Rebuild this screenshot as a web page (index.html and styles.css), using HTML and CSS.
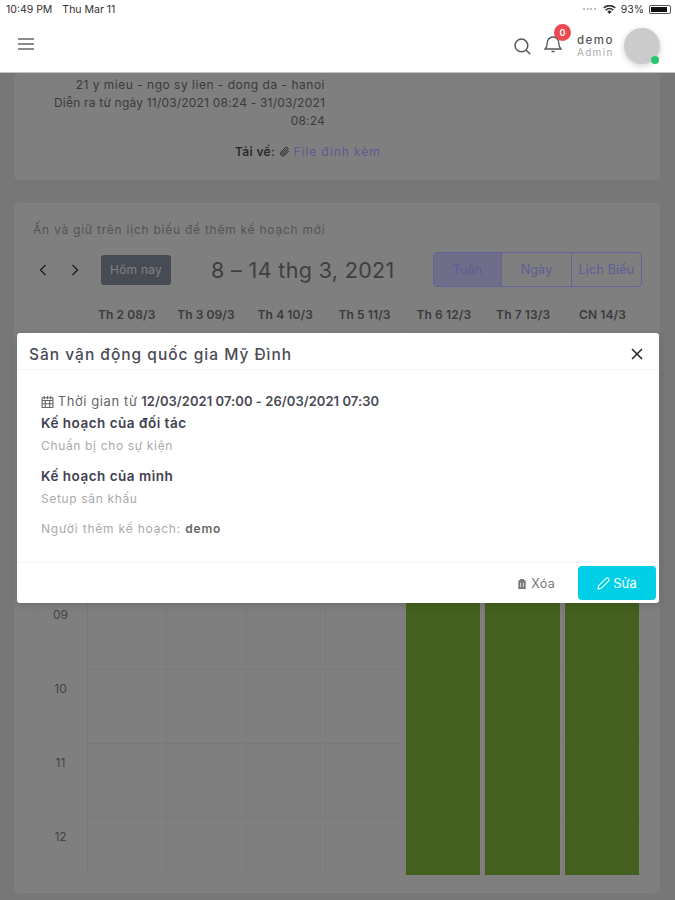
FILE: index.html
```html
<!DOCTYPE html>
<html lang="vi">
<head>
<meta charset="utf-8">
<title>Kế hoạch</title>
<link rel="stylesheet" href="styles.css">
</head>
<body>
<div class="app">
  <header class="topbar">
    <div class="status">
      <div class="status-left"><span>10:49 PM</span><span>Thu Mar 11</span></div>
      <div class="status-right">
        <span class="signal"><i></i><i></i><i></i><i></i></span>
        <svg class="wifi" viewBox="0 0 14 10"><path d="M7 10 4.600 7.400a3.400 3.400 0 0 1 4.800 0zM3.600 6.300 2.300 5a6.700 6.700 0 0 1 9.400 0l-1.300 1.300a4.900 4.900 0 0 0-6.800 0zM1.300 4 0 2.700a9.900 9.900 0 0 1 14 0L12.700 4a8.100 8.100 0 0 0-11.400 0z" fill="#333"/></svg>
        <span>93%</span>
        <span class="battery"><b></b></span>
      </div>
    </div>
    <nav class="nav">
      <svg class="menu" viewBox="0 0 16 12"><path d="M0 1h16M0 6h16M0 11h16" stroke="#666" stroke-width="1.400" fill="none"/></svg>
      <div class="nav-right">
        <svg class="search" viewBox="0 0 16 16"><circle cx="7" cy="7" r="6" fill="none" stroke="#555" stroke-width="1.400"/><path d="m11.500 11.500 3.800 3.800" stroke="#555" stroke-width="1.400"/></svg>
        <div class="bell-wrap">
          <svg class="bell" viewBox="0 0 18 18"><path d="M1 14h16c-1.600-1.400-2.200-2.600-2.200-6A5.800 5.800 0 0 0 9 2a5.800 5.800 0 0 0-5.800 6c0 3.400-.6 4.600-2.200 6zM7.500 16.500h3" fill="none" stroke="#555" stroke-width="1.300"/></svg>
          <span class="badge">0</span>
        </div>
        <div class="user"><span class="user-name">demo</span><span class="user-role">Admin</span></div>
        <div class="avatar"><span class="online"></span></div>
      </div>
    </nav>
  </header>

  <main class="content">
    <section class="card info-card">
      <div class="info-col">
        <p class="address">21 y mieu - ngo sy lien - dong da - hanoi</p>
        <p class="dates">Diễn ra từ ngày 11/03/2021 08:24 - 31/03/2021</p>
        <p class="dates">08:24</p>
      </div>
      <p class="attach"><b>Tải về:</b>
        <svg class="clip" viewBox="0 0 12 12"><path d="M10.500 5.500 6 10a2.500 2.500 0 0 1-3.600-3.600l4.600-4.600a1.700 1.700 0 0 1 2.400 2.400L4.900 8.700a.8.8 0 0 1-1.200-1.200L8 3.300" fill="none" stroke="#333" stroke-width="1"/></svg>
        <a class="link">File đính kèm</a></p>
    </section>

    <section class="card calendar-card">
      <p class="hint">Ấn và giữ trên lịch biểu để thêm kế hoạch mới</p>
      <div class="toolbar">
        <svg class="chev" viewBox="0 0 8 12"><path d="M6.500 1 1.500 6l5 5" fill="none" stroke="#333" stroke-width="1.300"/></svg>
        <svg class="chev" viewBox="0 0 8 12"><path d="m1.500 1 5 5-5 5" fill="none" stroke="#333" stroke-width="1.300"/></svg>
        <button class="today">Hôm nay</button>
        <h2 class="range">8 – 14 thg 3, 2021</h2>
        <div class="segments">
          <span class="seg seg-active">Tuần</span>
          <span class="seg">Ngày</span>
          <span class="seg">Lịch Biểu</span>
        </div>
      </div>
      <div class="grid">
        <span class="day d1">Th 2 08/3</span>
        <span class="day d2">Th 3 09/3</span>
        <span class="day d3">Th 4 10/3</span>
        <span class="day d4">Th 5 11/3</span>
        <span class="day d5">Th 6 12/3</span>
        <span class="day d6">Th 7 13/3</span>
        <span class="day d7">CN 14/3</span>
        <span class="hour h9">09</span>
        <span class="hour h10">10</span>
        <span class="hour h11">11</span>
        <span class="hour h12">12</span>
        <div class="event d5"></div>
        <div class="event d6"></div>
        <div class="event d7"></div>
      </div>
    </section>
  </main>

  <div class="backdrop"></div>

  <div class="modal">
    <div class="modal-head">
      <h3>Sân vận động quốc gia Mỹ Đình</h3>
      <svg class="close" viewBox="0 0 12 12"><path d="m1 1 10 10M11 1 1 11" stroke="#222" stroke-width="1.500"/></svg>
    </div>
    <div class="modal-body">
      <p class="when">
        <svg class="cal" viewBox="0 0 12 12"><path d="M1 2.500h10v9H1zM1 5h10M3 1v3M6 1v3M9 1v3M4 5v6.500M8 5v6.500M1 8h10" fill="none" stroke="#666" stroke-width="1"/></svg>
        <span class="when-label">Thời gian từ</span> <b>12/03/2021 07:00 - 26/03/2021 07:30</b></p>
      <h4 class="plan-title first">Kế hoạch của đối tác</h4>
      <p class="plan-text">Chuẩn bị cho sự kiện</p>
      <h4 class="plan-title">Kế hoạch của mình</h4>
      <p class="plan-text">Setup sân khấu</p>
      <p class="author">Người thêm kế hoạch: <b>demo</b></p>
    </div>
    <div class="modal-foot">
      <button class="btn-delete">
        <svg class="trash" viewBox="0 0 10 12"><path d="M1 2.500h8V12H1zM3 2.500V1h4v1.500" fill="#777"/><path d="M3.500 5v5M6.500 5v5" stroke="#fff" stroke-width=".8"/></svg>
        Xóa</button>
      <button class="btn-edit">
        <svg class="pencil" viewBox="0 0 14 14"><path d="M1 13l.8-3.600L9.800 1.400a1.500 1.500 0 0 1 2.100 0l.7.7a1.500 1.500 0 0 1 0 2.100L4.600 12.200z" fill="none" stroke="#fff" stroke-width="1.100"/></svg>
        Sửa</button>
    </div>
  </div>
</div>
</body>
</html>
```
FILE: styles.css
```css
* { box-sizing: border-box; }
html, body { margin: 0; padding: 0; }
body { font-family: Inter, "Noto Sans", sans-serif; color: #777; }
p, h2, h3, h4 { margin: 0; font-weight: 400; }
button { font-family: inherit; border: 0; background: none; padding: 0; }

.app { position: relative; width: 675px; height: 900px; overflow: hidden; background: #eeeeee; }

/* top bar */
.topbar { position: relative; z-index: 3; height: 73px; background: #fff; border-bottom: 1px solid #c4c4c4; }
.status { height: 20px; display: flex; justify-content: space-between; align-items: center; padding: 0 4px 2px 6px; font-size: 10.500px; color: #333; }
.status-left { display: flex; gap: 10px; }
.status-right { display: flex; align-items: center; gap: 5px; }
.signal { display: flex; gap: 1.500px; margin-right: 2px; }
.signal i { width: 2px; height: 2px; border-radius: 50%; background: #aaa; }
.wifi { width: 13px; height: 9px; }
.battery { width: 22px; height: 9px; border: 1px solid #555; border-radius: 2px; padding: 1px; }
.battery b { display: block; width: 90%; height: 100%; background: #111; }

.nav { height: 52px; display: flex; align-items: center; justify-content: space-between; padding: 0 15px 0 18px; }
.menu { width: 16px; height: 12px; margin-top: -5px; }
.nav-right { display: flex; align-items: center; }
.search { width: 17px; height: 17px; margin: 0 13px 0 0; }
.bell-wrap { position: relative; width: 18px; height: 18px; margin: -5px 15px 0 0; }
.bell { width: 18px; height: 18px; display: block; }
.badge { position: absolute; left: 10px; top: -11px; width: 17px; height: 17px; border-radius: 50%; background: #ea4a50; color: #fff; font-size: 9px; font-weight: 600; display: flex; align-items: center; justify-content: center; }
.user { display: flex; flex-direction: column; width: 38px; margin-right: 9px; line-height: 12px; }
.user-name { font-size: 11.500px; font-weight: 500; color: #555; letter-spacing: 1.500px; }
.user-role { font-size: 10px; color: #aaa; letter-spacing: 1.300px; }
.avatar { position: relative; width: 36px; height: 36px; border-radius: 50%; background: #cbcbcb; box-shadow: 0 2px 6px rgba(0,0,0,.18); }
.online { position: absolute; right: 1px; bottom: 0; width: 8px; height: 8px; border-radius: 50%; background: #28c76f; }

/* page under the backdrop */
.content { padding: 0 15px 0 14px; }
.card { background: #fff; border-radius: 5px; }
.info-card { height: 107px; padding-top: 3px; font-size: 12px; letter-spacing: .33px; color: #777; }
.info-col { width: 311px; text-align: right; line-height: 18px; }
.address { letter-spacing: .5px; }
.dates { letter-spacing: .2px; }
.attach { margin: 13px 0 0 221px; line-height: 18px; color: #555; }
.attach b { font-weight: 600; }
.clip { width: 11px; height: 11px; vertical-align: -1px; }
.link { position: relative; z-index: 2; color: #5c5b92; letter-spacing: .9px; }

.calendar-card { margin-top: 23px; height: 690px; padding: 19px 18px 0 19px; }
.hint { font-size: 12px; line-height: 16px; letter-spacing: .75px; color: #a8a8a8; }
.toolbar { display: flex; align-items: center; margin-top: 14px; height: 35px; }
.chev { width: 8px; height: 12px; margin-left: 6px; }
.chev + .chev { margin-left: 24px; }
.today { width: 70px; height: 30px; margin-left: 22px; background: #8e96a6; color: #fff; font-size: 12px; border-radius: 3px; letter-spacing: .2px; }
.range { font-size: 21.500px; color: #808080; margin-left: 40px; letter-spacing: .35px; white-space: nowrap; }
.segments { position: relative; z-index: 2; display: grid; grid-template-columns: 67px 70px 70px; margin-left: auto; height: 35px; border: 1px solid #62619a; border-radius: 4px; }
.seg { display: flex; align-items: center; justify-content: center; font-size: 12.500px; letter-spacing: .2px; color: #5e5d96; border-left: 1px solid #62619a; white-space: nowrap; }
.seg:first-child { border-left: 0; }
.seg-active { background: #6e6e8a; }

.grid {
  display: grid; margin: 18px 0 0 0; width: 609px;
  grid-template-columns: 53px repeat(7, 79.300px);
  grid-template-rows: 25px 43px repeat(6, 74px) 58px;
  background-color: #fff;
  background-image:
    linear-gradient(to right, #f3f3f3 1px, transparent 1px),
    linear-gradient(to bottom, #f3f3f3 1px, transparent 1px);
  background-size: 79.300px 100%, 100% 74px;
  background-position: 53px 0, 0 -6px;
  border-left: 1px solid #f6f6f6;
}
.day { grid-row: 1; align-self: center; text-align: center; font-size: 12px; font-weight: 600; color: #777; letter-spacing: .1px; white-space: nowrap; background: #fff; height: 25px; line-height: 20px; }
.d1 { grid-column: 2; } .d2 { grid-column: 3; } .d3 { grid-column: 4; } .d4 { grid-column: 5; }
.d5 { grid-column: 6; } .d6 { grid-column: 7; } .d7 { grid-column: 8; }
.hour { grid-column: 1; text-align: center; font-size: 12px; color: #888; padding-top: 12px; background: #fff; }
.h9 { grid-row: 6; } .h10 { grid-row: 7; } .h11 { grid-row: 8; } .h12 { grid-row: 9; }
.event { grid-row: 4 / 10; background: #88c03c; margin: 0 3px 0 2px; }

/* modal */
.backdrop { position: absolute; inset: 73px 0 0 0; z-index: 1; background: rgba(0,0,0,.5); }
.modal { position: absolute; z-index: 2; left: 17px; top: 333px; width: 642px; height: 270px; background: #fff; border-radius: 3px; display: flex; flex-direction: column; box-shadow: 0 2px 8px rgba(0,0,0,.15); }
.modal-head { height: 37px; display: flex; align-items: center; justify-content: space-between; padding: 6px 16px 0 12px; border-bottom: 1px solid #f4f4f4; }
.modal-head h3 { font-size: 15.500px; font-weight: 500; color: #4a4a55; letter-spacing: 1px; }
.close { width: 12px; height: 12px; }
.modal-body { flex: 1; padding: 22px 24px 0 24px; font-size: 13px; }
.when { line-height: 18px; color: #555; }
.when b { font-weight: 600; color: #4a4a55; letter-spacing: .05px; }
.when-label { color: #666; letter-spacing: .6px; }
.cal { width: 13px; height: 13px; vertical-align: -2px; }
.plan-title { font-size: 13.500px; font-weight: 600; color: #3f4050; line-height: 18px; letter-spacing: .5px; margin: 12px 0 0 0; }
.plan-title.first { margin-top: 4px; }
.plan-text { font-size: 12px; color: #aaa; line-height: 18px; margin-top: 5px; letter-spacing: .65px; }
.author { font-size: 12px; color: #aaa; line-height: 18px; margin-top: 12px; letter-spacing: .8px; }
.author b { font-weight: 600; color: #666; }
.modal-foot { height: 41px; display: flex; align-items: center; justify-content: flex-end; gap: 23px; padding: 0 3px 0 0; border-top: 1px solid #f4f4f4; }
.btn-delete { display: flex; align-items: center; gap: 4px; font-size: 12.500px; letter-spacing: .3px; color: #777; }
.trash { width: 10px; height: 11px; }
.btn-edit { width: 78px; height: 34px; background: #00cfe8; color: #fff; border-radius: 4px; font-size: 13px; display: flex; align-items: center; justify-content: center; gap: 3px; }
.pencil { width: 13px; height: 13px; }
```
